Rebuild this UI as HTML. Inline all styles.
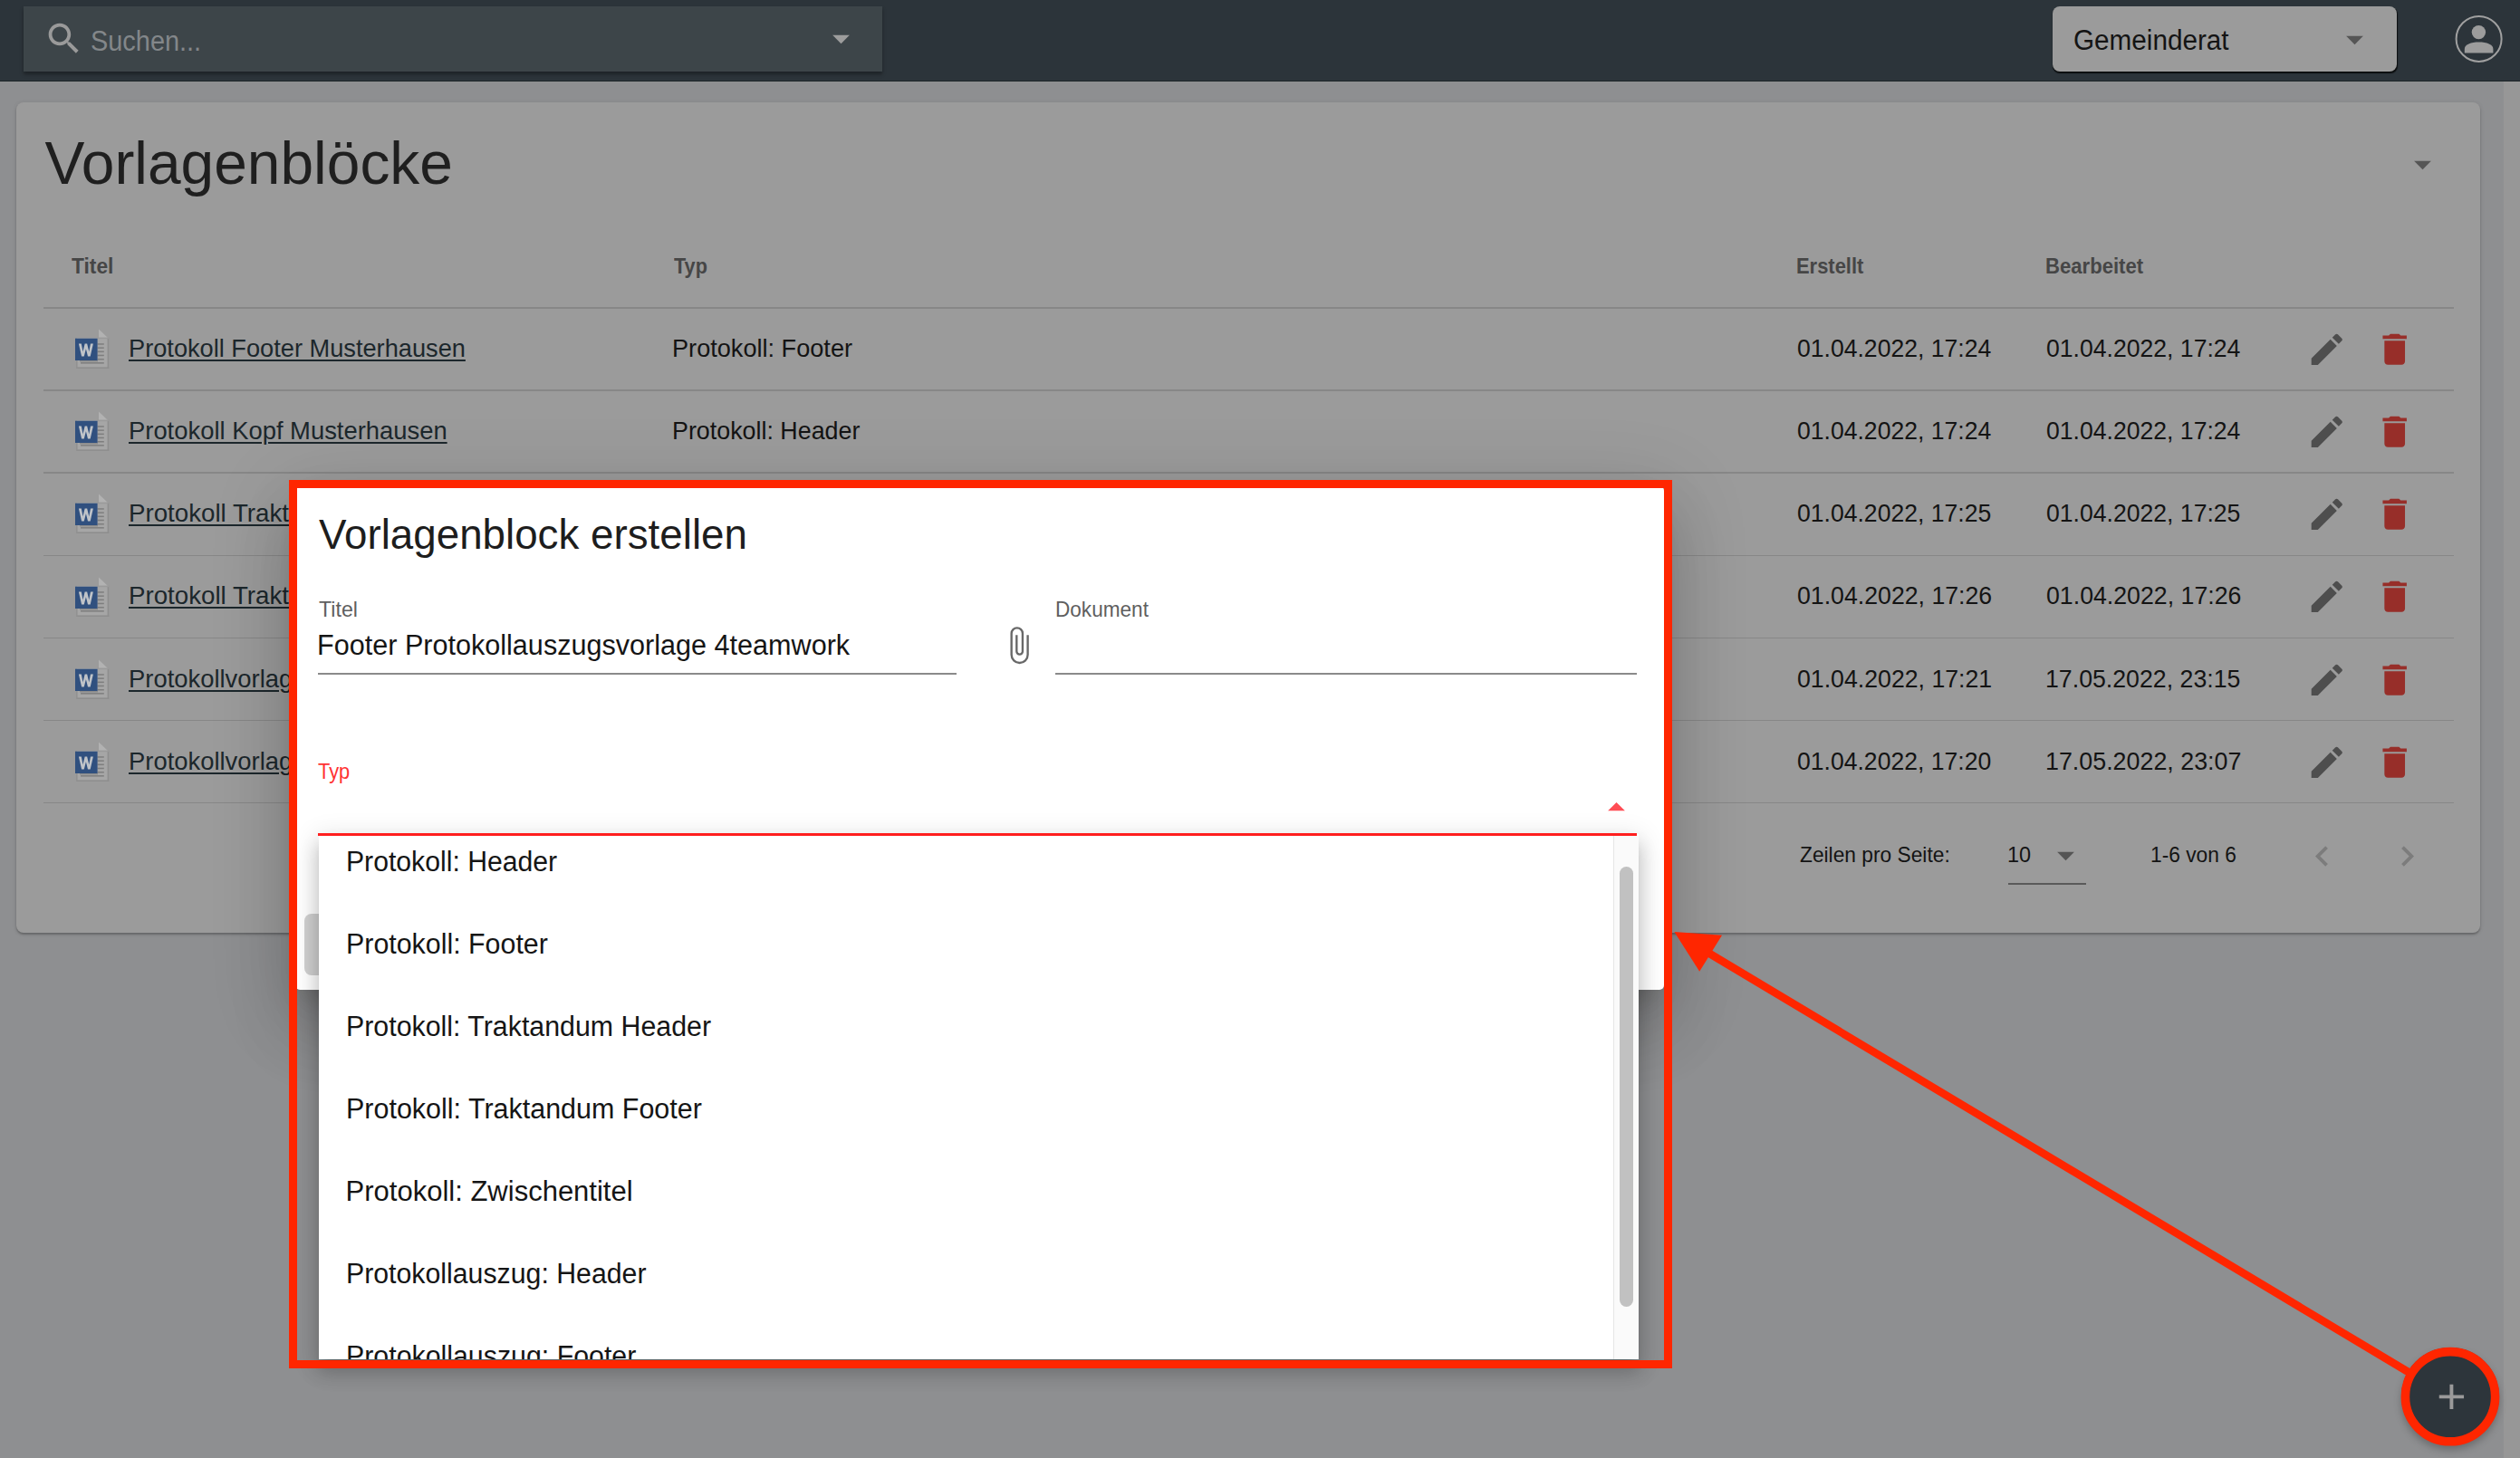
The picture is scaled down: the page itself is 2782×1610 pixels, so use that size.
<!DOCTYPE html>
<html><head><meta charset="utf-8"><title>Vorlagenblöcke</title>
<style>
html,body{margin:0;padding:0;}
body{width:2782px;height:1610px;overflow:hidden;position:relative;background:#8e8f91;font-family:'Liberation Sans', sans-serif;}
.t{position:absolute;white-space:nowrap;line-height:1;font-family:'Liberation Sans', sans-serif;}
.ic{position:absolute;display:block;}
.abs{position:absolute;}
</style></head><body>

<div class="abs" style="left:0;top:0;width:2782px;height:90px;background:#2c343a;"></div>
<div class="abs" style="left:0;top:88.5px;width:2782px;height:1.5px;background:#1d2529;"></div>
<div class="abs" style="left:26px;top:7px;width:948px;height:72px;background:#3d4549;box-shadow:0 3px 4px rgba(0,0,0,0.35);"></div>
<svg class="ic" style="left:48.30px;top:20.30px;width:45.29px;height:45.29px;" viewBox="0 0 24 24"><path fill="#9a9a9a" d="M15.5 14h-.79l-.28-.27C15.41 12.59 16 11.11 16 9.5 16 5.91 13.09 3 9.5 3S3 5.91 3 9.5 5.91 16 9.5 16c1.61 0 3.09-.59 4.23-1.57l.27.28v.79l5 4.99L20.49 19l-4.99-5zm-6 0C7.01 14 5 11.99 5 9.5S7.01 5 9.5 5 14 7.01 14 9.5 11.99 14 9.5 14z"/></svg>
<div class="t" style="left:100.33px;top:29.65px;font-size:31.00px;font-weight:400;color:#83878a;transform:scaleX(0.9325);transform-origin:0 0;">Suchen...</div>
<svg class="ic" style="left:906.00px;top:20.25px;width:45.00px;height:45.00px;" viewBox="0 0 24 24"><path fill="#9d9d9d" d="M7 10l5 5 5-5z"/></svg>
<div class="abs" style="left:2266px;top:7px;width:380px;height:72px;background:#9b9b9b;border-radius:8px;box-shadow:0.8px 1.6px 1px rgba(0,0,0,0.75);"></div>
<div class="t" style="left:2288.58px;top:28.95px;font-size:31.00px;font-weight:400;color:#141414;transform:scaleX(0.9576);transform-origin:0 0;">Gemeinderat</div>
<svg class="ic" style="left:2577.00px;top:21.00px;width:45.00px;height:45.00px;" viewBox="0 0 24 24"><path fill="#555555" d="M7 10l5 5 5-5z"/></svg>
<svg class="ic" style="left:2700px;top:7px;width:74px;height:74px" viewBox="2700 7 74 74">
<circle cx="2736.6" cy="42.9" r="25" fill="none" stroke="#a0a0a0" stroke-width="2"/>
<circle cx="2736.4" cy="35.6" r="7.7" fill="#9c9c9c"/>
<path d="M2720.8 58.6 V54 C2720.8 49 2728 46.4 2736.6 46.4 C2745.2 46.4 2752.4 49 2752.4 54 V58.6 Z" fill="#9c9c9c"/>
</svg>
<div class="abs" style="left:2763px;top:90px;width:19px;height:1520px;background:#979797;box-shadow:inset 1px 0 0 #8f9092;"></div>
<div class="abs" style="left:18px;top:113px;width:2720px;height:917px;background:#9b9b9b;border-radius:8px;box-shadow:0 2px 2px rgba(0,0,0,0.22),0 1px 5px rgba(0,0,0,0.12);"></div>
<div class="t" style="left:49.50px;top:148.22px;font-size:65.88px;font-weight:400;color:#1f1f1f;">Vorlagenblöcke</div>
<svg class="ic" style="left:2651.50px;top:158.80px;width:45.00px;height:45.00px;" viewBox="0 0 24 24"><path fill="#555555" d="M7 10l5 5 5-5z"/></svg>
<div class="t" style="left:79.20px;top:282.51px;font-size:23.25px;font-weight:700;color:#464646;transform:scaleX(0.9804);transform-origin:0 0;">Titel</div>
<div class="t" style="left:743.70px;top:282.51px;font-size:23.25px;font-weight:700;color:#464646;transform:scaleX(0.9308);transform-origin:0 0;">Typ</div>
<div class="t" style="left:1983.11px;top:282.71px;font-size:23.25px;font-weight:700;color:#464646;transform:scaleX(0.9429);transform-origin:0 0;">Erstellt</div>
<div class="t" style="left:2258.10px;top:282.71px;font-size:23.25px;font-weight:700;color:#464646;transform:scaleX(0.9509);transform-origin:0 0;">Bearbeitet</div>
<div class="abs" style="left:48px;top:339.25px;width:2661px;height:1.5px;background:#878787;"></div>
<div class="abs" style="left:48px;top:430.35px;width:2661px;height:1.5px;background:#878787;"></div>
<div class="abs" style="left:48px;top:521.45px;width:2661px;height:1.5px;background:#878787;"></div>
<div class="abs" style="left:48px;top:612.55px;width:2661px;height:1.5px;background:#878787;"></div>
<div class="abs" style="left:48px;top:703.65px;width:2661px;height:1.5px;background:#878787;"></div>
<div class="abs" style="left:48px;top:794.75px;width:2661px;height:1.5px;background:#878787;"></div>
<div class="abs" style="left:48px;top:885.85px;width:2661px;height:1.5px;background:#878787;"></div>
<svg class="ic" style="left:80px;top:360.0px;width:44px;height:50px" viewBox="80 360 44 50">
<rect x="85" y="373" width="35" height="34" fill="#a6a6a6"/>
<rect x="118.6" y="373" width="1.6" height="34" fill="#8e8e8e"/>
<rect x="85" y="405.4" width="35.2" height="1.6" fill="#8e8e8e"/>
<rect x="84.2" y="398" width="1.4" height="9" fill="#909090"/>
<polygon points="109,363.5 119,373 109,373" fill="#b2b2b2"/>
<rect x="107.6" y="372.6" width="12.6" height="1.6" fill="#9a9a9a"/>
<g fill="#7e7e7e"><rect x="107.6" y="379.2" width="7.2" height="1.5"/><rect x="107.6" y="383.4" width="7.2" height="1.5"/><rect x="107.6" y="387.6" width="7.2" height="1.5"/><rect x="107.6" y="391.7" width="7.2" height="1.5"/><rect x="107.6" y="396" width="7.2" height="1.5"/><rect x="89" y="400.1" width="25.8" height="1.5"/></g>
<rect x="88" y="398" width="20" height="1.4" fill="#8a8a8a"/>
<rect x="83" y="373.7" width="24.6" height="24.3" fill="#30507f"/>
<path d="M86.9 379.6 h2.9 l1.75 8.6 l2.1 -8.6 h2.5 l2.1 8.6 l1.75 -8.6 h2.9 l-3.2 13.9 h-2.7 l-2.1 -8.3 l-2.1 8.3 h-2.7 z" fill="#bfc3c8"/>
</svg>
<div class="t" style="left:142.49px;top:370.83px;font-size:27.13px;font-weight:400;color:#1c272c;transform:scaleX(1.0027);transform-origin:0 0;text-decoration:underline;text-decoration-thickness:2px;text-underline-offset:3px;">Protokoll Footer Musterhausen</div>
<div class="t" style="left:742.00px;top:370.83px;font-size:27.13px;font-weight:400;color:#141414;">Protokoll: Footer</div>
<div class="t" style="left:1984.02px;top:370.83px;font-size:27.13px;font-weight:400;color:#141414;transform:scaleX(0.9793);transform-origin:0 0;">01.04.2022, 17:24</div>
<div class="t" style="left:2259.02px;top:370.83px;font-size:27.13px;font-weight:400;color:#141414;transform:scaleX(0.9802);transform-origin:0 0;">01.04.2022, 17:24</div>
<svg class="ic" style="left:2545.50px;top:362.90px;width:45.60px;height:45.60px;" viewBox="0 0 24 24"><path fill="#4e4e4e" d="M3 17.25V21h3.75L17.81 9.94l-3.75-3.75L3 17.25zM20.71 7.04c.39-.39.39-1.02 0-1.41l-2.34-2.34c-.39-.39-1.02-.39-1.41 0l-1.83 1.83 3.75 3.75 1.83-1.83z"/></svg>
<svg class="ic" style="left:2620.80px;top:362.90px;width:45.36px;height:45.36px;" viewBox="0 0 24 24"><path fill="#972e29" d="M6 19c0 1.1.9 2 2 2h8c1.1 0 2-.9 2-2V7H6v12zM19 4h-3.5l-1-1h-5l-1 1H5v2h14V4z"/></svg>
<svg class="ic" style="left:80px;top:451.17px;width:44px;height:50px" viewBox="80 360 44 50">
<rect x="85" y="373" width="35" height="34" fill="#a6a6a6"/>
<rect x="118.6" y="373" width="1.6" height="34" fill="#8e8e8e"/>
<rect x="85" y="405.4" width="35.2" height="1.6" fill="#8e8e8e"/>
<rect x="84.2" y="398" width="1.4" height="9" fill="#909090"/>
<polygon points="109,363.5 119,373 109,373" fill="#b2b2b2"/>
<rect x="107.6" y="372.6" width="12.6" height="1.6" fill="#9a9a9a"/>
<g fill="#7e7e7e"><rect x="107.6" y="379.2" width="7.2" height="1.5"/><rect x="107.6" y="383.4" width="7.2" height="1.5"/><rect x="107.6" y="387.6" width="7.2" height="1.5"/><rect x="107.6" y="391.7" width="7.2" height="1.5"/><rect x="107.6" y="396" width="7.2" height="1.5"/><rect x="89" y="400.1" width="25.8" height="1.5"/></g>
<rect x="88" y="398" width="20" height="1.4" fill="#8a8a8a"/>
<rect x="83" y="373.7" width="24.6" height="24.3" fill="#30507f"/>
<path d="M86.9 379.6 h2.9 l1.75 8.6 l2.1 -8.6 h2.5 l2.1 8.6 l1.75 -8.6 h2.9 l-3.2 13.9 h-2.7 l-2.1 -8.3 l-2.1 8.3 h-2.7 z" fill="#bfc3c8"/>
</svg>
<div class="t" style="left:142.48px;top:462.00px;font-size:27.13px;font-weight:400;color:#1c272c;transform:scaleX(1.0096);transform-origin:0 0;text-decoration:underline;text-decoration-thickness:2px;text-underline-offset:3px;">Protokoll Kopf Musterhausen</div>
<div class="t" style="left:742.02px;top:462.00px;font-size:27.13px;font-weight:400;color:#141414;transform:scaleX(0.9894);transform-origin:0 0;">Protokoll: Header</div>
<div class="t" style="left:1984.02px;top:462.00px;font-size:27.13px;font-weight:400;color:#141414;transform:scaleX(0.9793);transform-origin:0 0;">01.04.2022, 17:24</div>
<div class="t" style="left:2259.02px;top:462.00px;font-size:27.13px;font-weight:400;color:#141414;transform:scaleX(0.9802);transform-origin:0 0;">01.04.2022, 17:24</div>
<svg class="ic" style="left:2545.50px;top:454.07px;width:45.60px;height:45.60px;" viewBox="0 0 24 24"><path fill="#4e4e4e" d="M3 17.25V21h3.75L17.81 9.94l-3.75-3.75L3 17.25zM20.71 7.04c.39-.39.39-1.02 0-1.41l-2.34-2.34c-.39-.39-1.02-.39-1.41 0l-1.83 1.83 3.75 3.75 1.83-1.83z"/></svg>
<svg class="ic" style="left:2620.80px;top:454.07px;width:45.36px;height:45.36px;" viewBox="0 0 24 24"><path fill="#972e29" d="M6 19c0 1.1.9 2 2 2h8c1.1 0 2-.9 2-2V7H6v12zM19 4h-3.5l-1-1h-5l-1 1H5v2h14V4z"/></svg>
<svg class="ic" style="left:80px;top:542.34px;width:44px;height:50px" viewBox="80 360 44 50">
<rect x="85" y="373" width="35" height="34" fill="#a6a6a6"/>
<rect x="118.6" y="373" width="1.6" height="34" fill="#8e8e8e"/>
<rect x="85" y="405.4" width="35.2" height="1.6" fill="#8e8e8e"/>
<rect x="84.2" y="398" width="1.4" height="9" fill="#909090"/>
<polygon points="109,363.5 119,373 109,373" fill="#b2b2b2"/>
<rect x="107.6" y="372.6" width="12.6" height="1.6" fill="#9a9a9a"/>
<g fill="#7e7e7e"><rect x="107.6" y="379.2" width="7.2" height="1.5"/><rect x="107.6" y="383.4" width="7.2" height="1.5"/><rect x="107.6" y="387.6" width="7.2" height="1.5"/><rect x="107.6" y="391.7" width="7.2" height="1.5"/><rect x="107.6" y="396" width="7.2" height="1.5"/><rect x="89" y="400.1" width="25.8" height="1.5"/></g>
<rect x="88" y="398" width="20" height="1.4" fill="#8a8a8a"/>
<rect x="83" y="373.7" width="24.6" height="24.3" fill="#30507f"/>
<path d="M86.9 379.6 h2.9 l1.75 8.6 l2.1 -8.6 h2.5 l2.1 8.6 l1.75 -8.6 h2.9 l-3.2 13.9 h-2.7 l-2.1 -8.3 l-2.1 8.3 h-2.7 z" fill="#bfc3c8"/>
</svg>
<div class="t" style="left:142.46px;top:553.17px;font-size:27.13px;font-weight:400;color:#1c272c;transform:scaleX(1.0210);transform-origin:0 0;text-decoration:underline;text-decoration-thickness:2px;text-underline-offset:3px;">Protokoll Traktandum Header</div>
<div class="t" style="left:742.03px;top:553.17px;font-size:27.13px;font-weight:400;color:#141414;transform:scaleX(0.9850);transform-origin:0 0;">Protokoll: Traktandum Header</div>
<div class="t" style="left:1984.02px;top:553.17px;font-size:27.13px;font-weight:400;color:#141414;transform:scaleX(0.9793);transform-origin:0 0;">01.04.2022, 17:25</div>
<div class="t" style="left:2259.02px;top:553.17px;font-size:27.13px;font-weight:400;color:#141414;transform:scaleX(0.9802);transform-origin:0 0;">01.04.2022, 17:25</div>
<svg class="ic" style="left:2545.50px;top:545.24px;width:45.60px;height:45.60px;" viewBox="0 0 24 24"><path fill="#4e4e4e" d="M3 17.25V21h3.75L17.81 9.94l-3.75-3.75L3 17.25zM20.71 7.04c.39-.39.39-1.02 0-1.41l-2.34-2.34c-.39-.39-1.02-.39-1.41 0l-1.83 1.83 3.75 3.75 1.83-1.83z"/></svg>
<svg class="ic" style="left:2620.80px;top:545.24px;width:45.36px;height:45.36px;" viewBox="0 0 24 24"><path fill="#972e29" d="M6 19c0 1.1.9 2 2 2h8c1.1 0 2-.9 2-2V7H6v12zM19 4h-3.5l-1-1h-5l-1 1H5v2h14V4z"/></svg>
<svg class="ic" style="left:80px;top:633.51px;width:44px;height:50px" viewBox="80 360 44 50">
<rect x="85" y="373" width="35" height="34" fill="#a6a6a6"/>
<rect x="118.6" y="373" width="1.6" height="34" fill="#8e8e8e"/>
<rect x="85" y="405.4" width="35.2" height="1.6" fill="#8e8e8e"/>
<rect x="84.2" y="398" width="1.4" height="9" fill="#909090"/>
<polygon points="109,363.5 119,373 109,373" fill="#b2b2b2"/>
<rect x="107.6" y="372.6" width="12.6" height="1.6" fill="#9a9a9a"/>
<g fill="#7e7e7e"><rect x="107.6" y="379.2" width="7.2" height="1.5"/><rect x="107.6" y="383.4" width="7.2" height="1.5"/><rect x="107.6" y="387.6" width="7.2" height="1.5"/><rect x="107.6" y="391.7" width="7.2" height="1.5"/><rect x="107.6" y="396" width="7.2" height="1.5"/><rect x="89" y="400.1" width="25.8" height="1.5"/></g>
<rect x="88" y="398" width="20" height="1.4" fill="#8a8a8a"/>
<rect x="83" y="373.7" width="24.6" height="24.3" fill="#30507f"/>
<path d="M86.9 379.6 h2.9 l1.75 8.6 l2.1 -8.6 h2.5 l2.1 8.6 l1.75 -8.6 h2.9 l-3.2 13.9 h-2.7 l-2.1 -8.3 l-2.1 8.3 h-2.7 z" fill="#bfc3c8"/>
</svg>
<div class="t" style="left:142.46px;top:644.34px;font-size:27.13px;font-weight:400;color:#1c272c;transform:scaleX(1.0210);transform-origin:0 0;text-decoration:underline;text-decoration-thickness:2px;text-underline-offset:3px;">Protokoll Traktandum Footer</div>
<div class="t" style="left:742.03px;top:644.34px;font-size:27.13px;font-weight:400;color:#141414;transform:scaleX(0.9850);transform-origin:0 0;">Protokoll: Traktandum Footer</div>
<div class="t" style="left:1984.02px;top:644.34px;font-size:27.13px;font-weight:400;color:#141414;transform:scaleX(0.9838);transform-origin:0 0;">01.04.2022, 17:26</div>
<div class="t" style="left:2259.02px;top:644.34px;font-size:27.13px;font-weight:400;color:#141414;transform:scaleX(0.9847);transform-origin:0 0;">01.04.2022, 17:26</div>
<svg class="ic" style="left:2545.50px;top:636.41px;width:45.60px;height:45.60px;" viewBox="0 0 24 24"><path fill="#4e4e4e" d="M3 17.25V21h3.75L17.81 9.94l-3.75-3.75L3 17.25zM20.71 7.04c.39-.39.39-1.02 0-1.41l-2.34-2.34c-.39-.39-1.02-.39-1.41 0l-1.83 1.83 3.75 3.75 1.83-1.83z"/></svg>
<svg class="ic" style="left:2620.80px;top:636.41px;width:45.36px;height:45.36px;" viewBox="0 0 24 24"><path fill="#972e29" d="M6 19c0 1.1.9 2 2 2h8c1.1 0 2-.9 2-2V7H6v12zM19 4h-3.5l-1-1h-5l-1 1H5v2h14V4z"/></svg>
<svg class="ic" style="left:80px;top:724.68px;width:44px;height:50px" viewBox="80 360 44 50">
<rect x="85" y="373" width="35" height="34" fill="#a6a6a6"/>
<rect x="118.6" y="373" width="1.6" height="34" fill="#8e8e8e"/>
<rect x="85" y="405.4" width="35.2" height="1.6" fill="#8e8e8e"/>
<rect x="84.2" y="398" width="1.4" height="9" fill="#909090"/>
<polygon points="109,363.5 119,373 109,373" fill="#b2b2b2"/>
<rect x="107.6" y="372.6" width="12.6" height="1.6" fill="#9a9a9a"/>
<g fill="#7e7e7e"><rect x="107.6" y="379.2" width="7.2" height="1.5"/><rect x="107.6" y="383.4" width="7.2" height="1.5"/><rect x="107.6" y="387.6" width="7.2" height="1.5"/><rect x="107.6" y="391.7" width="7.2" height="1.5"/><rect x="107.6" y="396" width="7.2" height="1.5"/><rect x="89" y="400.1" width="25.8" height="1.5"/></g>
<rect x="88" y="398" width="20" height="1.4" fill="#8a8a8a"/>
<rect x="83" y="373.7" width="24.6" height="24.3" fill="#30507f"/>
<path d="M86.9 379.6 h2.9 l1.75 8.6 l2.1 -8.6 h2.5 l2.1 8.6 l1.75 -8.6 h2.9 l-3.2 13.9 h-2.7 l-2.1 -8.3 l-2.1 8.3 h-2.7 z" fill="#bfc3c8"/>
</svg>
<div class="t" style="left:142.48px;top:735.51px;font-size:27.13px;font-weight:400;color:#1c272c;transform:scaleX(1.0100);transform-origin:0 0;text-decoration:underline;text-decoration-thickness:2px;text-underline-offset:3px;">Protokollvorlage Musterhausen</div>
<div class="t" style="left:742.03px;top:735.51px;font-size:27.13px;font-weight:400;color:#141414;transform:scaleX(0.9850);transform-origin:0 0;">Protokoll: Zwischentitel</div>
<div class="t" style="left:1984.02px;top:735.51px;font-size:27.13px;font-weight:400;color:#141414;transform:scaleX(0.9838);transform-origin:0 0;">01.04.2022, 17:21</div>
<div class="t" style="left:2258.03px;top:735.51px;font-size:27.13px;font-weight:400;color:#141414;transform:scaleX(0.9847);transform-origin:0 0;">17.05.2022, 23:15</div>
<svg class="ic" style="left:2545.50px;top:727.58px;width:45.60px;height:45.60px;" viewBox="0 0 24 24"><path fill="#4e4e4e" d="M3 17.25V21h3.75L17.81 9.94l-3.75-3.75L3 17.25zM20.71 7.04c.39-.39.39-1.02 0-1.41l-2.34-2.34c-.39-.39-1.02-.39-1.41 0l-1.83 1.83 3.75 3.75 1.83-1.83z"/></svg>
<svg class="ic" style="left:2620.80px;top:727.58px;width:45.36px;height:45.36px;" viewBox="0 0 24 24"><path fill="#972e29" d="M6 19c0 1.1.9 2 2 2h8c1.1 0 2-.9 2-2V7H6v12zM19 4h-3.5l-1-1h-5l-1 1H5v2h14V4z"/></svg>
<svg class="ic" style="left:80px;top:815.85px;width:44px;height:50px" viewBox="80 360 44 50">
<rect x="85" y="373" width="35" height="34" fill="#a6a6a6"/>
<rect x="118.6" y="373" width="1.6" height="34" fill="#8e8e8e"/>
<rect x="85" y="405.4" width="35.2" height="1.6" fill="#8e8e8e"/>
<rect x="84.2" y="398" width="1.4" height="9" fill="#909090"/>
<polygon points="109,363.5 119,373 109,373" fill="#b2b2b2"/>
<rect x="107.6" y="372.6" width="12.6" height="1.6" fill="#9a9a9a"/>
<g fill="#7e7e7e"><rect x="107.6" y="379.2" width="7.2" height="1.5"/><rect x="107.6" y="383.4" width="7.2" height="1.5"/><rect x="107.6" y="387.6" width="7.2" height="1.5"/><rect x="107.6" y="391.7" width="7.2" height="1.5"/><rect x="107.6" y="396" width="7.2" height="1.5"/><rect x="89" y="400.1" width="25.8" height="1.5"/></g>
<rect x="88" y="398" width="20" height="1.4" fill="#8a8a8a"/>
<rect x="83" y="373.7" width="24.6" height="24.3" fill="#30507f"/>
<path d="M86.9 379.6 h2.9 l1.75 8.6 l2.1 -8.6 h2.5 l2.1 8.6 l1.75 -8.6 h2.9 l-3.2 13.9 h-2.7 l-2.1 -8.3 l-2.1 8.3 h-2.7 z" fill="#bfc3c8"/>
</svg>
<div class="t" style="left:142.48px;top:826.68px;font-size:27.13px;font-weight:400;color:#1c272c;transform:scaleX(1.0100);transform-origin:0 0;text-decoration:underline;text-decoration-thickness:2px;text-underline-offset:3px;">Protokollvorlage Gemeinde</div>
<div class="t" style="left:742.03px;top:826.68px;font-size:27.13px;font-weight:400;color:#141414;transform:scaleX(0.9850);transform-origin:0 0;">Protokoll: Header</div>
<div class="t" style="left:1984.02px;top:826.68px;font-size:27.13px;font-weight:400;color:#141414;transform:scaleX(0.9793);transform-origin:0 0;">01.04.2022, 17:20</div>
<div class="t" style="left:2258.02px;top:826.68px;font-size:27.13px;font-weight:400;color:#141414;transform:scaleX(0.9893);transform-origin:0 0;">17.05.2022, 23:07</div>
<svg class="ic" style="left:2545.50px;top:818.75px;width:45.60px;height:45.60px;" viewBox="0 0 24 24"><path fill="#4e4e4e" d="M3 17.25V21h3.75L17.81 9.94l-3.75-3.75L3 17.25zM20.71 7.04c.39-.39.39-1.02 0-1.41l-2.34-2.34c-.39-.39-1.02-.39-1.41 0l-1.83 1.83 3.75 3.75 1.83-1.83z"/></svg>
<svg class="ic" style="left:2620.80px;top:818.75px;width:45.36px;height:45.36px;" viewBox="0 0 24 24"><path fill="#972e29" d="M6 19c0 1.1.9 2 2 2h8c1.1 0 2-.9 2-2V7H6v12zM19 4h-3.5l-1-1h-5l-1 1H5v2h14V4z"/></svg>
<div class="t" style="left:1986.92px;top:933.11px;font-size:23.25px;font-weight:400;color:#141414;transform:scaleX(0.9789);transform-origin:0 0;">Zeilen pro Seite:</div>
<div class="t" style="left:2215.58px;top:933.11px;font-size:23.25px;font-weight:400;color:#141414;transform:scaleX(1.0087);transform-origin:0 0;">10</div>
<svg class="ic" style="left:2257.50px;top:921.60px;width:45.00px;height:45.00px;" viewBox="0 0 24 24"><path fill="#555555" d="M7 10l5 5 5-5z"/></svg>
<div class="abs" style="left:2217px;top:974.5px;width:86px;height:2px;background:#5a5a5a;"></div>
<div class="t" style="left:2374.04px;top:933.11px;font-size:23.25px;font-weight:400;color:#141414;transform:scaleX(0.9787);transform-origin:0 0;">1-6 von 6</div>
<svg class="ic" style="left:2541.00px;top:922.60px;width:45.00px;height:45.00px;" viewBox="0 0 24 24"><path fill="#7c7c7c" d="M15.41 7.41L14 6l-6 6 6 6 1.41-1.41L10.83 12z"/></svg>
<svg class="ic" style="left:2635.40px;top:922.60px;width:45.00px;height:45.00px;" viewBox="0 0 24 24"><path fill="#7c7c7c" d="M10 6L8.59 7.41 13.17 12l-4.58 4.59L10 18l6-6z"/></svg>
<div class="abs" style="left:2651px;top:1488px;width:108px;height:108px;border-radius:50%;background:#2d353b;box-shadow:0 5px 8px rgba(0,0,0,0.25);"></div>
<svg class="ic" style="left:2683.00px;top:1519.45px;width:46.80px;height:46.80px;" viewBox="0 0 24 24"><path fill="#9a9a9a" d="M19 13h-6v6h-2v-6H5v-2h6V5h2v6h6v2z"/></svg>
<div class="abs" style="left:326px;top:537px;width:1511px;height:556px;background:#fff;border-radius:5px;box-shadow:0 20px 28px -13px rgba(0,0,0,0.2),0 45px 71px 6px rgba(0,0,0,0.14),0 17px 86px 15px rgba(0,0,0,0.12);"></div>
<div class="t" style="left:352.00px;top:566.82px;font-size:46.50px;font-weight:400;color:#1d1d1d;transform:scaleX(0.9837);transform-origin:0 0;">Vorlagenblock erstellen</div>
<div class="t" style="left:351.90px;top:661.81px;font-size:23.25px;font-weight:400;color:#5f5f5f;transform:scaleX(0.9976);transform-origin:0 0;">Titel</div>
<div class="t" style="left:350.04px;top:696.95px;font-size:31.00px;font-weight:400;color:#151515;transform:scaleX(0.9865);transform-origin:0 0;">Footer Protokollauszugsvorlage 4teamwork</div>
<div class="abs" style="left:351px;top:743px;width:705px;height:2px;background:#8a8a8a;"></div>
<svg class="ic" style="left:1102.03px;top:690.17px;width:45.36px;height:45.36px" viewBox="0 0 24 24"><path d="M17.25 6 V17.5 A4.75 4.75 0 0 1 7.75 17.5 V5 A3.25 3.25 0 0 1 14.25 5 V15.5 A1.75 1.75 0 0 1 10.75 15.5 V6" fill="none" stroke="#686868" stroke-width="1.25"/></svg>
<div class="t" style="left:1164.56px;top:661.51px;font-size:23.25px;font-weight:400;color:#5f5f5f;transform:scaleX(0.9712);transform-origin:0 0;">Dokument</div>
<div class="abs" style="left:1165px;top:743px;width:642px;height:2px;background:#8a8a8a;"></div>
<div class="t" style="left:351.40px;top:840.71px;font-size:23.25px;font-weight:400;color:#ff3333;transform:scaleX(0.9405);transform-origin:0 0;">Typ</div>
<svg class="ic" style="left:1762.00px;top:868.60px;width:45.00px;height:45.00px;" viewBox="0 0 24 24"><path fill="#ff4d55" d="M7 14l5-5 5 5z"/></svg>
<div class="abs" style="left:336px;top:1009px;width:300px;height:68px;background:#d1d1d1;border-radius:8px;"></div>
<div class="abs" style="left:352px;top:921px;width:1457px;height:580px;background:#fff;box-shadow:0 9px 9px -6px rgba(0,0,0,0.2),0 15px 19px 2px rgba(0,0,0,0.14),0 6px 26px 4px rgba(0,0,0,0.12);overflow:hidden;"></div>
<div class="abs" style="left:351px;top:920px;width:1456px;height:3px;background:#ff1f1f;"></div>
<div class="abs" style="left:352px;top:923px;width:1457px;height:578px;overflow:hidden;"><div class="abs" style="left:-352px;top:-923px;width:2782px;height:1610px;">
<div class="t" style="left:381.68px;top:935.75px;font-size:31.00px;font-weight:400;color:#151515;transform:scaleX(0.9733);transform-origin:0 0;">Protokoll: Header</div>
<div class="t" style="left:381.66px;top:1026.72px;font-size:31.00px;font-weight:400;color:#151515;transform:scaleX(0.9799);transform-origin:0 0;">Protokoll: Footer</div>
<div class="t" style="left:381.66px;top:1117.69px;font-size:31.00px;font-weight:400;color:#151515;transform:scaleX(0.9787);transform-origin:0 0;">Protokoll: Traktandum Header</div>
<div class="t" style="left:381.65px;top:1208.66px;font-size:31.00px;font-weight:400;color:#151515;transform:scaleX(0.9828);transform-origin:0 0;">Protokoll: Traktandum Footer</div>
<div class="t" style="left:381.60px;top:1299.63px;font-size:31.00px;font-weight:400;color:#151515;">Protokoll: Zwischentitel</div>
<div class="t" style="left:381.67px;top:1390.60px;font-size:31.00px;font-weight:400;color:#151515;transform:scaleX(0.9765);transform-origin:0 0;">Protokollauszug: Header</div>
<div class="t" style="left:381.66px;top:1481.57px;font-size:31.00px;font-weight:400;color:#151515;transform:scaleX(0.9784);transform-origin:0 0;">Protokollauszug: Footer</div>
</div></div>
<div class="abs" style="left:1781px;top:923px;width:28px;height:578px;background:#fafafa;border-left:1px solid #e6e6e6;box-sizing:border-box;"></div>
<div class="abs" style="left:1788px;top:957px;width:15px;height:486px;background:#c1c1c1;border-radius:8px;"></div>
<div class="abs" style="left:319px;top:530px;width:1527px;height:981px;box-sizing:border-box;border:9px solid #ff2600;"></div>
<svg class="ic" style="left:0;top:0;width:2782px;height:1610px" viewBox="0 0 2782 1610">
<line x1="1884" y1="1051" x2="2662" y2="1517" stroke="#ff2600" stroke-width="8.6"/>
<polygon points="1848.4,1029 1901,1032.7 1876.2,1072.8" fill="#ff2600"/>
<circle cx="2705" cy="1542.2" r="49.6" fill="none" stroke="#ff2600" stroke-width="9.6"/>
</svg>
</body></html>
